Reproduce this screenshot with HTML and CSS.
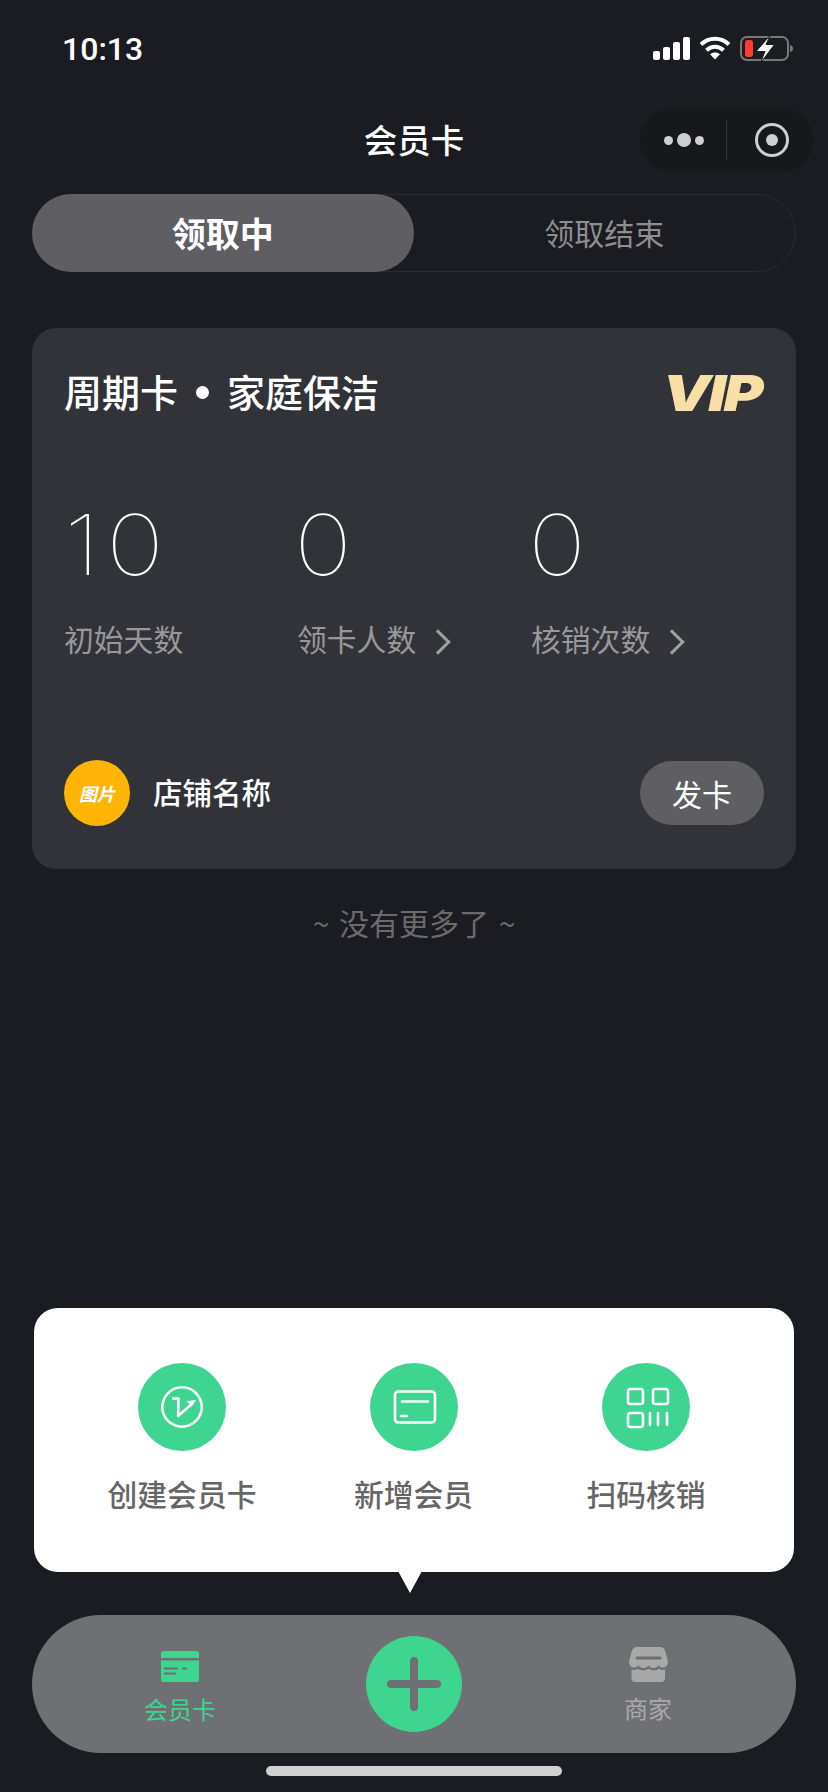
FILE: index.html
```html
<!DOCTYPE html>
<html lang="zh-CN">
<head>
    <meta charset="UTF-8">
    <meta name="viewport" content="width=device-width, initial-scale=1.0">
    <title>会员卡</title>
    <link rel="stylesheet" href="styles.css">
</head>
<body>
    <div class="page">
        <div class="status-bar">
            <span class="time">10:13</span>
            <div class="status-icons">
                <svg class="signal" width="37" height="23" viewBox="0 0 37 23" fill="#fff">
                    <rect x="0" y="14" width="7" height="9" rx="2"/>
                    <rect x="10" y="10" width="7" height="13" rx="2"/>
                    <rect x="20" y="5" width="7" height="18" rx="2"/>
                    <rect x="30" y="0" width="7" height="23" rx="2"/>
                </svg>
                <svg class="wifi" width="32" height="24" viewBox="0 0 32 24" fill="none" stroke="#fff" stroke-width="4">
                    <path d="M2 8.500C10 .8 22 .8 30 8.500"/>
                    <path d="M7.500 14.200C12.500 9.600 19.500 9.600 24.500 14.200"/>
                    <path d="M16 23.500l-5-5.200c2.900-2.300 7.100-2.300 10 0z" fill="#fff" stroke="none"/>
                </svg>
                <svg class="battery" width="54" height="28" viewBox="0 0 54 28" fill="none">
                    <rect x="1" y="2" width="47" height="23" rx="6" stroke="#77787a" stroke-width="2"/>
                    <rect x="5" y="5" width="8" height="17" rx="3" fill="#ff3b30"/>
                    <path d="M50 10c2 .5 3 2 3 3.500s-1 3-3 3.500z" fill="#77787a"/>
                    <path d="M30.500 0L16 16.500H25L20.500 28 34.500 9.500H26z" fill="#fff" stroke="#1b1c21" stroke-width="1"/>
                </svg>
            </div>
        </div>

        <div class="nav-bar">
            <h1 class="nav-title">会员卡</h1>
            <div class="capsule">
                <div class="capsule-dots"><i></i><i class="big"></i><i></i></div>
                <div class="capsule-line"></div>
                <div class="capsule-ring"><i></i></div>
            </div>
        </div>

        <div class="tabs">
            <div class="tab active">领取中</div>
            <div class="tab">领取结束</div>
        </div>

        <div class="card">
            <div class="card-head">
                <div class="card-title">周期卡<span class="dot"></span>家庭保洁</div>
                <div class="vip">VIP</div>
            </div>
            <div class="stats">
                <div class="stat">
                    <div class="stat-num">10</div>
                    <div class="stat-label">初始天数</div>
                </div>
                <div class="stat">
                    <div class="stat-num zero">0</div>
                    <div class="stat-label">领卡人数<span class="arrow"></span></div>
                </div>
                <div class="stat">
                    <div class="stat-num zero">0</div>
                    <div class="stat-label">核销次数<span class="arrow"></span></div>
                </div>
            </div>
            <div class="card-foot">
                <div class="shop-logo">图片</div>
                <div class="shop-name">店铺名称</div>
                <div class="send-btn">发卡</div>
            </div>
        </div>

        <div class="no-more">~ 没有更多了 ~</div>

        <div class="popup">
            <div class="popup-item">
                <div class="popup-icon">
                    <svg width="88" height="88" viewBox="0 0 88 88" fill="none" stroke="#fff" stroke-width="2.600">
                        <circle cx="44" cy="44" r="19.700"/>
                        <path d="M34 35.500h6.500l-.3 17.500L55 40" stroke-linejoin="round"/>
                        <path d="M58 37l-9.500 1.200 5 5.300z" fill="#fff" stroke="none"/>
                    </svg>
                </div>
                <div class="popup-label">创建会员卡</div>
            </div>
            <div class="popup-item">
                <div class="popup-icon">
                    <svg width="88" height="88" viewBox="0 0 88 88" fill="none" stroke="#fff" stroke-width="2.600" stroke-linecap="round">
                        <rect x="25" y="28.500" width="40" height="31" rx="3.500"/>
                        <path d="M32 38.500h26"/>
                        <path d="M31 53h6"/>
                    </svg>
                </div>
                <div class="popup-label">新增会员</div>
            </div>
            <div class="popup-item">
                <div class="popup-icon">
                    <svg width="88" height="88" viewBox="0 0 88 88" fill="none" stroke="#fff" stroke-width="2.600" stroke-linecap="round">
                        <rect x="26" y="26" width="15" height="15" rx="2.500"/>
                        <rect x="51" y="26" width="15" height="15" rx="2.500"/>
                        <rect x="26" y="50" width="15" height="14" rx="2.500"/>
                        <path d="M48 50v12M56 50v12M65 50v12"/>
                    </svg>
                </div>
                <div class="popup-label">扫码核销</div>
            </div>
            <div class="popup-tip"></div>
        </div>

        <div class="tab-bar">
            <div class="tab-item on">
                <svg width="38" height="31" viewBox="0 0 38 31">
                    <path d="M2.500 0h33A2.500 2.500 0 0 1 38 2.500V7H0V2.500A2.500 2.500 0 0 1 2.500 0z" fill="#3dd58f"/>
                    <path d="M0 9.500h38V28.500A2.500 2.500 0 0 1 35.500 31h-33A2.500 2.500 0 0 1 0 28.500z" fill="#3dd58f"/>
                    <path d="M3.500 17.500H16M3.500 22.500H14M22 17.500h3" stroke="#6f7073" stroke-width="2" stroke-linecap="round"/>
                </svg>
                <span>会员卡</span>
            </div>
            <div class="tab-add"><i class="add-h"></i><i class="add-v"></i></div>
            <div class="tab-item shop">
                <svg width="39" height="35" viewBox="0 0 39 35" fill="#a9a9aa">
                    <path d="M8 0h23c3 0 5 2 5.500 5l2.300 9c.6 3-1 6-4.300 6.500-2 .3-3.800-.5-5-2-1.200 1.700-3 2.500-5 2.500s-4-.8-5-2.500c-1.200 1.700-3 2.500-5 2.500s-3.800-.8-5-2.500c-1.200 1.500-3 2.300-5 2C1.300 20 -.4 17 .2 14L2.500 5C3 2 5 0 8 0z"/>
                    <path d="M2.500 22.500c2.500.8 4.700.5 6.500-.8 2.800 2 7.500 2 10.500 0 3 2 7.700 2 10.500 0 1.800 1.300 4 1.600 6 .8V31c0 2.500-1.500 4-4 4H6.500c-2.500 0-4-1.500-4-4z"/>
                    <path d="M8 11h23" stroke="#6f7073" stroke-width="3" stroke-linecap="round"/>
                </svg>
                <span>商家</span>
            </div>
        </div>

        <div class="home-bar"></div>
    </div>
</body>
</html>
```

FILE: styles.css
```css
* { margin: 0; padding: 0; box-sizing: border-box; }
body { font-family: "Noto Sans CJK SC", "Noto Sans", sans-serif; background: #1b1c21; }
i { display: block; }
.page { position: relative; width: 828px; height: 1792px; display: flex; flex-direction: column; overflow: hidden; }

.status-bar { height: 98px; padding: 0 34px 0 62px; display: flex; align-items: center; justify-content: space-between; }
.time { font-family: Roboto, sans-serif; font-size: 32px; font-weight: 500; color: #fff; }
.status-icons { display: flex; align-items: center; gap: 9px; }
.signal { margin-top: -1px; }
.wifi { margin-top: -2px; }

.nav-bar { height: 86px; padding: 0 15px; display: grid; grid-template-columns: 1fr auto 1fr; align-items: center; }
.nav-title { grid-column: 2; font-size: 33.500px; line-height: 46px; font-weight: 500; color: #fff; margin-top: -4px; }
.capsule { grid-column: 3; justify-self: end; width: 173px; height: 64px; border-radius: 32px; background: #17181b; display: flex; align-items: center; margin-top: -2px; }
.capsule-dots { width: 86px; padding-left: 1px; display: flex; align-items: center; justify-content: center; gap: 4px; }
.capsule-dots i { width: 9px; height: 9px; border-radius: 50%; background: #cfcfcf; }
.capsule-dots i.big { width: 14px; height: 14px; }
.capsule-line { width: 1px; height: 40px; background: #36373a; }
.capsule-ring { width: 34px; height: 34px; margin-left: 28px; border: 3.500px solid #cfcfcf; border-radius: 50%; display: flex; align-items: center; justify-content: center; }
.capsule-ring i { width: 12px; height: 12px; border-radius: 50%; background: #cfcfcf; }

.tabs { margin: 10px 32px 0; height: 78px; border: 1px solid #2a2b30; border-radius: 39px; display: flex; }
.tab { flex: 1; display: flex; align-items: center; justify-content: center; font-size: 30px; color: #8e8e90; padding-bottom: 2px; }
.tab.active { margin: -1px 0 -1px -1px; background: #5f5f63; border-radius: 39px; font-size: 34px; font-weight: 700; color: #fff; }

.card { margin: 56px 32px 0; height: 541px; padding: 0 32px; background: #323338; border-radius: 24px; }
.card-head { height: 126px; display: flex; align-items: center; justify-content: space-between; }
.card-title { font-size: 38px; line-height: 52px; font-weight: 500; color: #fff; display: flex; align-items: center; }
.dot { width: 13px; height: 13px; margin: 2px 18px 0; border-radius: 50%; background: #fff; }
.vip { font-family: Inter, sans-serif; font-size: 50px; line-height: 50px; font-weight: 900; font-style: italic; letter-spacing: -2px; color: #f6e0a6; margin: 4px 3px 0 0; transform: scaleX(1.22); transform-origin: right center; }

.stats { display: grid; grid-template-columns: 233px 234px 1fr; margin-top: 41px; }
.stat-num { font-family: Inter, sans-serif; font-size: 84px; line-height: 100px; font-weight: 100; letter-spacing: 5px; color: #fff; transform: scaleX(1.17); transform-origin: left center; }
.stat-num.zero { margin-left: -3px; }
.stat-label { margin-top: 21px; font-size: 29.800px; line-height: 44px; color: #98989b; display: flex; align-items: center; }
.arrow { width: 18px; height: 18px; margin: 8px 0 0 13px; border-top: 3px solid #a0a0a2; border-right: 3px solid #a0a0a2; transform: rotate(45deg); }

.card-foot { margin-top: 100px; display: flex; align-items: center; }
.shop-logo { width: 66px; height: 66px; border-radius: 50%; background: #ffb406; color: #fff; font-size: 18px; font-weight: 700; font-style: italic; display: flex; align-items: center; justify-content: center; }
.shop-name { flex: 1; margin: -4px 0 0 23px; font-size: 29.500px; line-height: 44px; font-weight: 500; color: #fff; }
.send-btn { width: 124px; height: 64px; border-radius: 32px; background: #5f5f63; color: #fff; font-size: 30px; display: flex; align-items: center; justify-content: center; }

.no-more { margin-top: 31px; text-align: center; font-size: 30px; line-height: 44px; color: #6b6b6e; word-spacing: 3px; }

.popup { position: relative; margin: auto 34px 0; height: 264px; background: #fff; border-radius: 24px; display: grid; grid-template-columns: 232px 231px 234px; padding: 55px 0 0 32px; }
.popup-item { display: flex; flex-direction: column; align-items: center; }
.popup-icon { width: 88px; height: 88px; border-radius: 50%; background: #3dd58f; }
.popup-label { margin-top: 20px; font-size: 29.800px; line-height: 44px; font-weight: 500; color: #666; }
.popup-tip { position: absolute; left: 364px; bottom: -21px; border-left: 12px solid transparent; border-right: 12px solid transparent; border-top: 22px solid #fff; }

.tab-bar { margin: 43px 32px 0; height: 138px; border-radius: 69px; background: #6f7073; display: grid; grid-template-columns: 296px 1fr 296px; justify-items: center; align-items: center; }
.tab-item { display: flex; flex-direction: column; align-items: center; gap: 10px; padding-top: 9px; font-size: 24px; line-height: 34px; color: #a9a9aa; }
.tab-item.on { color: #3dd58f; }
.tab-item.shop { gap: 9px; padding-top: 4px; }
.tab-item svg { display: block; }
.tab-add { position: relative; width: 96px; height: 96px; border-radius: 50%; background: #3dd58f; }
.add-h { position: absolute; left: 21px; top: 44px; width: 54px; height: 8px; border-radius: 4px; background: #6f7073; }
.add-v { position: absolute; left: 44px; top: 21px; width: 8px; height: 54px; border-radius: 4px; background: #6f7073; }

.home-bar { margin: 13px auto 16px; width: 296px; height: 10px; border-radius: 5px; background: #d0d0d0; }
```
